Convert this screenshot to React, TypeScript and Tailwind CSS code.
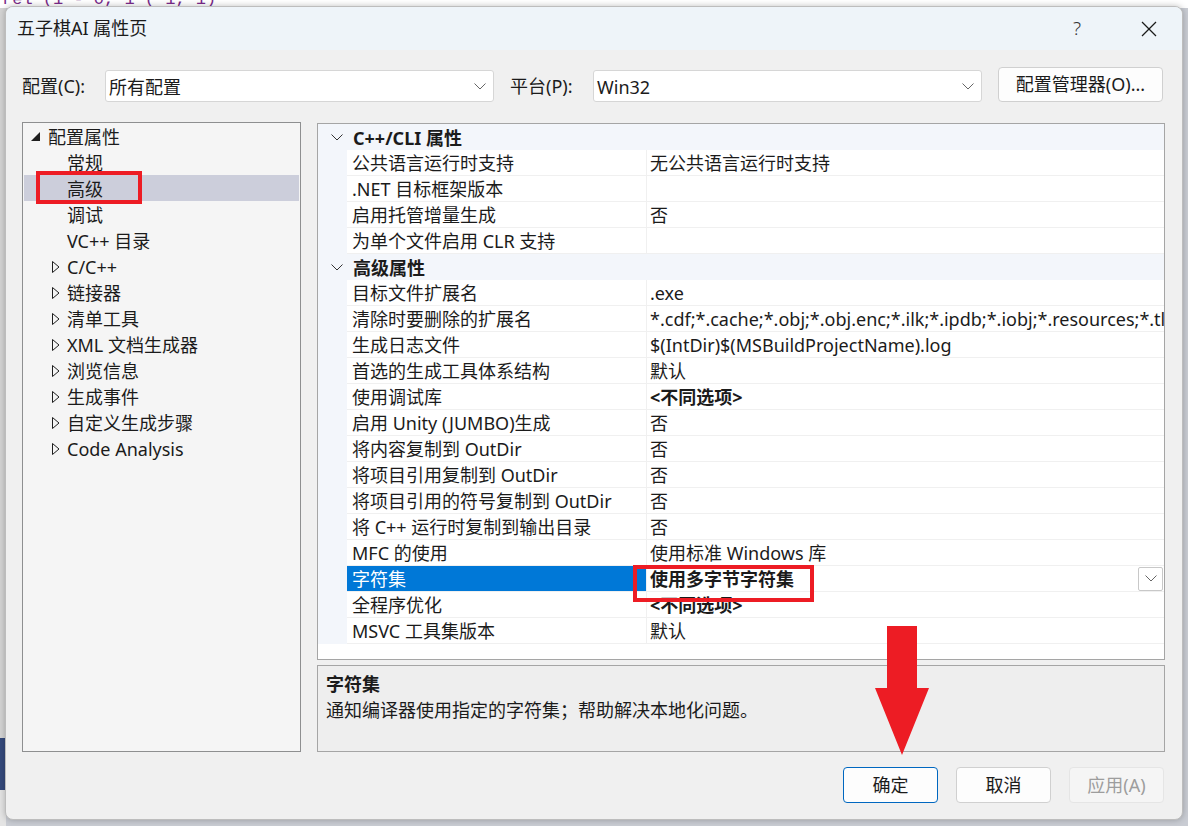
import React from "react";

type TreeItem = { label: string; level: 0 | 1; expanded?: boolean; collapsed?: boolean; selected?: boolean };

const treeItems: TreeItem[] = [
  { label: "配置属性", level: 0, expanded: true },
  { label: "常规", level: 1 },
  { label: "高级", level: 1, selected: true },
  { label: "调试", level: 1 },
  { label: "VC++ 目录", level: 1 },
  { label: "C/C++", level: 1, collapsed: true },
  { label: "链接器", level: 1, collapsed: true },
  { label: "清单工具", level: 1, collapsed: true },
  { label: "XML 文档生成器", level: 1, collapsed: true },
  { label: "浏览信息", level: 1, collapsed: true },
  { label: "生成事件", level: 1, collapsed: true },
  { label: "自定义生成步骤", level: 1, collapsed: true },
  { label: "Code Analysis", level: 1, collapsed: true },
];

type Row =
  | { kind: "cat"; label: string }
  | { kind: "prop"; name: string; value: string; bold?: boolean; selected?: boolean };

const rows: Row[] = [
  { kind: "cat", label: "C++/CLI 属性" },
  { kind: "prop", name: "公共语言运行时支持", value: "无公共语言运行时支持" },
  { kind: "prop", name: ".NET 目标框架版本", value: "" },
  { kind: "prop", name: "启用托管增量生成", value: "否" },
  { kind: "prop", name: "为单个文件启用 CLR 支持", value: "" },
  { kind: "cat", label: "高级属性" },
  { kind: "prop", name: "目标文件扩展名", value: ".exe" },
  {
    kind: "prop",
    name: "清除时要删除的扩展名",
    value: "*.cdf;*.cache;*.obj;*.obj.enc;*.ilk;*.ipdb;*.iobj;*.resources;*.tlb;*.tli;*.tlh;*.tmp;*.rsp",
  },
  { kind: "prop", name: "生成日志文件", value: "$(IntDir)$(MSBuildProjectName).log" },
  { kind: "prop", name: "首选的生成工具体系结构", value: "默认" },
  { kind: "prop", name: "使用调试库", value: "<不同选项>", bold: true },
  { kind: "prop", name: "启用 Unity (JUMBO)生成", value: "否" },
  { kind: "prop", name: "将内容复制到 OutDir", value: "否" },
  { kind: "prop", name: "将项目引用复制到 OutDir", value: "否" },
  { kind: "prop", name: "将项目引用的符号复制到 OutDir", value: "否" },
  { kind: "prop", name: "将 C++ 运行时复制到输出目录", value: "否" },
  { kind: "prop", name: "MFC 的使用", value: "使用标准 Windows 库" },
  { kind: "prop", name: "字符集", value: "使用多字节字符集", bold: true, selected: true },
  { kind: "prop", name: "全程序优化", value: "<不同选项>", bold: true },
  { kind: "prop", name: "MSVC 工具集版本", value: "默认" },
];

const Chevron = ({ color = "#555" }: { color?: string }) => (
  <svg width="12" height="7" viewBox="0 0 12 7" fill="none">
    <polyline points="0.5,0.5 6,6 11.5,0.5" stroke={color} strokeWidth="1" />
  </svg>
);

const Combo = ({ text }: { text: string }) => (
  <div className="shrink-0 w-[389px] h-[32px] bg-white border border-[#d6d6d6] rounded-[3px] flex items-center justify-between pl-[3px] pr-[7px]">
    <span className="leading-[32px] pt-[1px]">{text}</span>
    <Chevron color="#666" />
  </div>
);

export default function App() {
  return (
    <div className="relative w-[1188px] h-[826px] overflow-hidden bg-[#c9ccd3] font-['Noto_Sans','Noto_Sans_CJK_SC',sans-serif] text-[18px] text-[#1b1b1b]">
      {/* backdrop behind the dialog */}
      <div className="absolute left-0 top-0 w-full h-[8px] bg-white overflow-hidden">
        <div className="absolute left-[2px] top-[-13px] font-['Liberation_Mono',monospace] text-[17px] text-[#7a2a8a] whitespace-nowrap">
          rel (1 - 0, 1 ( 1, 1)
        </div>
      </div>
      <div className="absolute left-0 top-[8px] w-[6px] h-[730px] bg-[#d4d4d4]" />
      <div className="absolute left-0 top-[738px] w-[6px] h-[52px] bg-[#354a7c]" />
      <div className="absolute left-0 top-[790px] w-[6px] h-[36px] bg-[#e4e4e4]" />

      {/* dialog */}
      <div className="relative ml-[5px] mt-[6px] w-[1178px] h-[814px] rounded-[8px] border border-[#bdbdbd] bg-[#f0f0f0] overflow-hidden shadow-[0_0_6px_rgba(0,0,0,0.25)] flex flex-col">
        {/* title bar */}
        <div className="h-[43px] shrink-0 bg-[#eef4f9] flex items-center pl-[11px] pr-[25px]">
          <span className="flex-1">五子棋AI 属性页</span>
          <span className="text-[19px] font-light text-[#333] mr-[60px]">?</span>
          <svg width="16" height="16" viewBox="0 0 16 16">
            <line x1="1" y1="1" x2="15" y2="15" stroke="#1a1a1a" strokeWidth="1.3" />
            <line x1="15" y1="1" x2="1" y2="15" stroke="#1a1a1a" strokeWidth="1.3" />
          </svg>
        </div>

        {/* body */}
        <div className="flex-1 flex flex-col pl-[16px] pr-[17px]">
          {/* configuration row */}
          <div className="mt-[17px] h-[35px] flex items-end pr-[1px] whitespace-nowrap">
            <span className="w-[83px] shrink-0 leading-[32px] pt-[1px]">配置(C):</span>
            <Combo text="所有配置" />
            <span className="w-[83px] shrink-0 ml-[16px] leading-[32px] pt-[1px]">平台(P):</span>
            <Combo text="Win32" />
            <button className="shrink-0 ml-[16px] w-[165px] h-[35px] bg-[#fdfdfd] border border-[#d0d0d0] rounded-[4px] flex items-center justify-center">
              配置管理器(O)...
            </button>
          </div>

          {/* main area */}
          <div className="mt-[20px] h-[630px] flex gap-[16px]">
            {/* tree */}
            <div className="relative shrink-0 w-[279px] h-full border border-[#8e8f90] bg-[#f5f5f5] whitespace-nowrap">
              {treeItems.map((it) => (
                <div
                  key={it.label}
                  className={`h-[26px] flex items-center leading-[26px] pt-[1px] ${it.selected ? "bg-[#cccedb] mx-[1px]" : ""}`}
                >
                  {it.level === 0 ? (
                    <>
                      <svg width="9" height="9" viewBox="0 0 9 9" className="ml-[8px] mr-[8px]">
                        <polygon points="9,0 9,9 0,9" fill="#1e1e1e" />
                      </svg>
                      <span>{it.label}</span>
                    </>
                  ) : it.collapsed ? (
                    <>
                      <svg width="8" height="12" viewBox="0 0 8 12" className="ml-[29px] mr-[7px]">
                        <polygon points="0.5,0.5 7,6 0.5,11.5" fill="none" stroke="#1e1e1e" strokeWidth="1" />
                      </svg>
                      <span>{it.label}</span>
                    </>
                  ) : (
                    <span className={it.selected ? "pl-[43px]" : "pl-[44px]"}>{it.label}</span>
                  )}
                </div>
              ))}
              <div className="absolute left-[13px] top-[48px] w-[106px] h-[33px] border-[4px] border-[#ed1c24]" />
            </div>

            {/* right column */}
            <div className="flex-1 min-w-0 flex flex-col">
              <div className="relative mt-[1px] h-[537px] border border-[#a5a5a5] bg-white overflow-hidden">
                {rows.map((r, i) =>
                  r.kind === "cat" ? (
                    <div key={i} className="h-[26px] flex items-center bg-[#f3f6fb] font-bold">
                      <span className="w-[35px] flex justify-center pl-[3px]">
                        <Chevron color="#333" />
                      </span>
                      <span className="pt-[2px]">{r.label}</span>
                    </div>
                  ) : (
                    <div key={i} className="h-[26px] flex">
                      <div className="w-[29px] shrink-0 bg-[#f3f6fb]" />
                      <div
                        className={`w-[299px] shrink-0 border-b border-[#f0f0f0] pl-[5px] pt-[2px] leading-[23px] whitespace-nowrap overflow-hidden ${
                          r.selected ? "bg-[#0078d7] text-white border-[#0078d7]" : ""
                        }`}
                      >
                        {r.name}
                      </div>
                      <div className="flex-1 min-w-0 border-l border-b border-[#f0f0f0] pl-[3px] flex items-center justify-between overflow-hidden">
                        <span className={`whitespace-nowrap leading-[25px] pt-[2px] ${r.bold ? "font-bold" : ""}`}>{r.value}</span>
                        {r.selected && (
                          <span className="shrink-0 w-[25px] h-[24px] mr-[1px] bg-white border border-[#c8c8c8] rounded-[2px] flex items-center justify-center">
                            <Chevron color="#666" />
                          </span>
                        )}
                      </div>
                    </div>
                  )
                )}
                <div className="absolute left-[315px] top-[441px] w-[181px] h-[37px] border-[4px] border-[#ed1c24]" />
              </div>
              <div className="mt-[5px] h-[87px] border border-[#a5a5a5] bg-[#eeeeee] pl-[8px] pt-[5px] leading-[26px]">
                <div className="font-bold">字符集</div>
                <div>通知编译器使用指定的字符集；帮助解决本地化问题。</div>
              </div>
            </div>
          </div>

          {/* buttons */}
          <div className="mt-[15px] h-[36px] flex justify-end gap-[18px] pr-[1px]">
            <button className="w-[95px] h-[36px] bg-[#fdfdfd] border border-[#0067c0] rounded-[4px]">确定</button>
            <button className="w-[95px] h-[36px] bg-[#fdfdfd] border border-[#d0d0d0] rounded-[4px]">取消</button>
            <button className="w-[95px] h-[36px] bg-[#f5f5f5] border border-[#e5e5e5] rounded-[4px] text-[#9d9d9d]">应用(A)</button>
          </div>
        </div>
      </div>

      {/* red arrow annotation */}
      <svg className="absolute left-[874px] top-[625px]" width="56" height="131" viewBox="0 0 56 131">
        <polygon points="13,1 43,1 43,63 55,63 28,130 1,63 13,63" fill="#ed1c24" />
      </svg>
    </div>
  );
}
